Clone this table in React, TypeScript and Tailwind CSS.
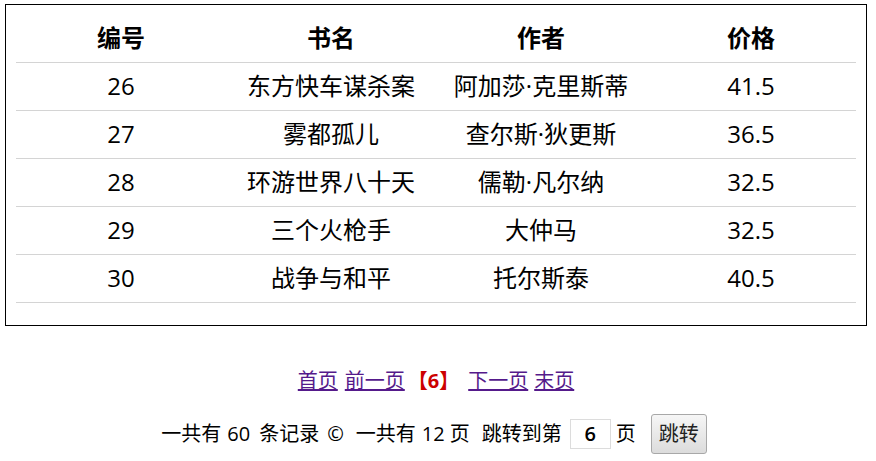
import React from "react";

const rows = [
  ["26", "东方快车谋杀案", "阿加莎·克里斯蒂", "41.5"],
  ["27", "雾都孤儿", "查尔斯·狄更斯", "36.5"],
  ["28", "环游世界八十天", "儒勒·凡尔纳", "32.5"],
  ["29", "三个火枪手", "大仲马", "32.5"],
  ["30", "战争与和平", "托尔斯泰", "40.5"],
];

const font = { fontFamily: '"Open Sans", "Noto Sans CJK SC", sans-serif' };

export default function App() {
  return (
    <div className="bg-white w-[876px] h-[461px] text-black" style={font}>
      <div className="pt-[4px] pl-[5px]">
        <div className="w-[862px] border border-black px-[10px] pt-[10px] pb-[22px]">
          <table className="w-full border-collapse table-fixed">
            <thead>
              <tr className="h-[47px] border-b border-[#d4d4d4]">
                {["编号", "书名", "作者", "价格"].map((h) => (
                  <th key={h} className="w-1/4 text-center font-bold text-[24px] leading-none p-0">
                    {h}
                  </th>
                ))}
              </tr>
            </thead>
            <tbody>
              {rows.map((r) => (
                <tr key={r[0]} className="h-[48px] border-b border-[#d4d4d4]">
                  {r.map((c, i) => (
                    <td key={i} className="text-center text-[24px] leading-none p-0">
                      {c}
                    </td>
                  ))}
                </tr>
              ))}
            </tbody>
          </table>
        </div>
      </div>

      <div className="mt-[43px] flex justify-center items-center h-[24px] text-[20px] leading-[24px] pr-[4px]">
        <a className="underline text-[#551a8b] cursor-pointer">首页</a>
        <a className="underline text-[#551a8b] ml-[7px] cursor-pointer">前一页</a>
        <span className="ml-[3px] text-[#cc0000] font-bold">【6】</span>
        <a className="underline text-[#551a8b] ml-[9px] cursor-pointer">下一页</a>
        <a className="underline text-[#551a8b] ml-[6px] cursor-pointer">末页</a>
      </div>

      <div className="mt-[21px] flex justify-center items-center h-[40px] text-[20px] leading-none pr-[8px]">
        <span>一共有</span>
        <span className="ml-[6px]">60</span>
        <span className="ml-[9px]">条记录</span>
        <span className="ml-[8px]">©</span>
        <span className="ml-[12px]">一共有</span>
        <span className="ml-[6px]">12</span>
        <span className="ml-[5px]">页</span>
        <span className="ml-[12px]">跳转到第</span>
        <div className="ml-[8px] w-[41px] h-[30px] border border-[#dcdcdc] flex items-center justify-center font-semibold">
          6
        </div>
        <span className="ml-[5px]">页</span>
        <button className="ml-[15px] w-[56px] h-[40px] rounded-[3px] border border-[#a8a8a8] bg-gradient-to-b from-[#f6f6f6] to-[#dcdcdc] text-[20px] text-[#222]">
          跳转
        </button>
      </div>
    </div>
  );
}
